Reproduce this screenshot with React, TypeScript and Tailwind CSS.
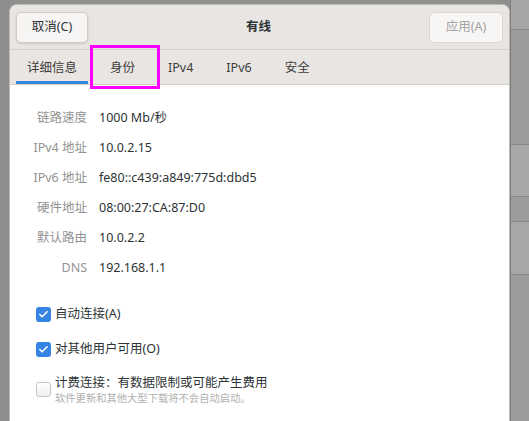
import { Check } from "lucide-react";

const FONT = { fontFamily: '"Noto Sans", "Noto Sans CJK SC", sans-serif' };

const DETAILS: [string, string][] = [
  ["链路速度", "1000 Mb/秒"],
  ["IPv4 地址", "10.0.2.15"],
  ["IPv6 地址", "fe80::c439:a849:775d:dbd5"],
  ["硬件地址", "08:00:27:CA:87:D0"],
  ["默认路由", "10.0.2.2"],
  ["DNS", "192.168.1.1"],
];

const TABS = ["详细信息", "身份", "IPv4", "IPv6", "安全"];

function Box({ checked }: { checked: boolean }) {
  if (checked) {
    return (
      <span className="flex h-[15px] w-[15px] shrink-0 items-center justify-center rounded-[3px] bg-[#3584e4]">
        <Check className="h-[11px] w-[11px] text-white" strokeWidth={3.5} />
      </span>
    );
  }
  return (
    <span className="block h-[15px] w-[15px] shrink-0 rounded-[3px] border border-[#c9c4bf] bg-gradient-to-b from-[#ffffff] to-[#f1efed]" />
  );
}

export default function App() {
  return (
    <div className="flex h-[421px] w-[529px] overflow-hidden bg-[#8f8f8f] text-[12.5px]" style={FONT}>
      <div className="w-[9px] shrink-0 bg-[#8e8e8e]" />

      <div className="mt-[4px] flex w-[501px] shrink-0 flex-col overflow-hidden rounded-t-[8px] border border-b-0 border-[#bdb9b5] bg-white">
        {/* header bar */}
        <div className="flex h-[44px] shrink-0 items-center justify-between bg-[#e8e5e2] px-[6px]">
          <button className="flex h-[31px] w-[72px] items-center justify-center rounded-[5px] border border-[#d2cdc8] bg-[#f6f5f4] text-[#2e3436] shadow-sm">
            取消(C)
          </button>
          <span className="font-bold text-[#2e3436]">有线</span>
          <button className="flex h-[31px] w-[74px] items-center justify-center rounded-[5px] border border-[#dcd8d4] bg-[#f7f6f5] text-[#a3a3a3]">
            应用(A)
          </button>
        </div>

        {/* tabs */}
        <div className="relative flex h-[36px] shrink-0 gap-[11px] border-y border-[#d3cfcb] bg-[#e8e5e2] pl-[6px]">
          {TABS.map((t, i) => (
            <div
              key={t}
              className={`flex items-center border-b-[3px] px-[11px] pt-[5px] text-[#3d3d3d] ${
                i === 0 ? "border-[#3584e4]" : "border-transparent"
              }`}
            >
              {t}
            </div>
          ))}
          <div className="pointer-events-none absolute left-[80px] top-[-5px] h-[44px] w-[70px] border-[3px] border-[#ff00ff]" />
        </div>

        {/* content */}
        <div className="flex flex-1 flex-col pt-[18px]">
          <div className="grid grid-cols-[61px_1fr] gap-x-[12px] pl-[16px]">
            {DETAILS.map(([k, v]) => (
              <div key={k} className="contents">
                <div className="flex h-[30px] items-center justify-end whitespace-nowrap pt-[1px] text-[#939393]">{k}</div>
                <div className="flex h-[30px] items-center pt-[1px] text-[#2e3436]">{v}</div>
              </div>
            ))}
          </div>

          <div className="mt-[19px] flex flex-col pl-[26px]">
            <label className="flex h-[24px] items-center gap-[4px] text-[#2e3436]">
              <Box checked />
              自动连接(A)
            </label>
            <label className="mt-[11px] flex h-[24px] items-center gap-[4px] text-[#2e3436]">
              <Box checked />
              对其他用户可用(O)
            </label>
            <div className="mt-[13px] flex gap-[4px]">
              <div className="pt-[8px]">
                <Box checked={false} />
              </div>
              <div className="flex flex-col">
                <span className="leading-[17px] text-[#2e3436]">计费连接：有数据限制或可能产生费用</span>
                <span className="text-[10.3px] leading-[14px] text-[#b0b0b0]">软件更新和其他大型下载将不会自动启动。</span>
              </div>
            </div>
          </div>
        </div>
      </div>

      <div className="flex flex-1 flex-col border-l border-[#7d7d7d] bg-[#9c9c9c]">
        <div className="h-[30px] border-b border-[#8a8a8a] bg-[#a6a6a6]" />
        <div className="h-[115px] border-b border-[#878787] bg-[#9c9c9c]" />
        <div className="h-[52px] border-b border-[#878787] bg-[#a8a8a8]" />
        <div className="h-[25px] border-b border-[#878787] bg-[#9c9c9c]" />
        <div className="h-[53px] border-b border-[#878787] bg-[#a8a8a8]" />
        <div className="flex-1 bg-[#9c9c9c]" />
      </div>
    </div>
  );
}
